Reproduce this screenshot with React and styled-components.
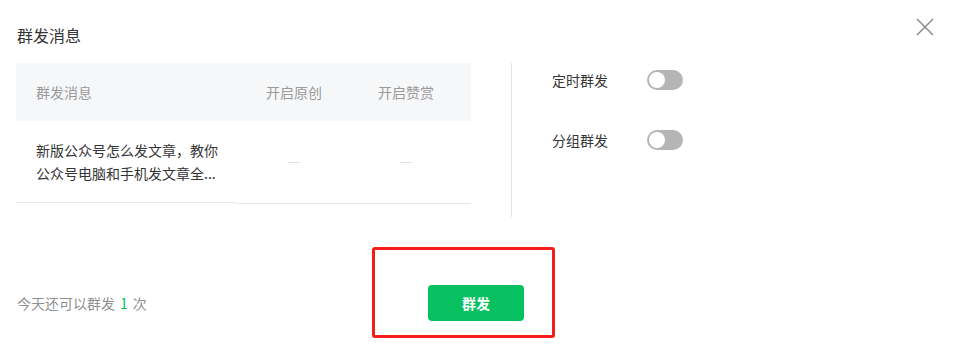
import React from "react";
import styled, { createGlobalStyle } from "styled-components";

const GlobalStyle = createGlobalStyle`
  html, body { margin: 0; padding: 0; background: #fff; }
  body { font-family: "Noto Sans CJK SC", "Noto Sans", "Liberation Sans", sans-serif; }
  * { box-sizing: border-box; }
`;

const Dialog = styled.div`
  width: 961px;
  height: 349px;
  background: #fff;
  display: flex;
  flex-direction: column;
`;

const Header = styled.div`
  display: flex;
  justify-content: space-between;
  align-items: flex-start;
  padding: 18px 27px 0 17px;
`;

const Title = styled.h3`
  margin: 9px 0 0;
  font-size: 16px;
  line-height: 16px;
  font-weight: 400;
  color: #353535;
`;

const CloseButton = styled.button`
  width: 18px;
  height: 18px;
  padding: 0;
  border: 0;
  background: none;
  cursor: pointer;
  display: block;
  svg { display: block; }
`;

const Body = styled.div`
  display: flex;
  margin-top: 20px;
  padding-left: 16px;
`;

const Table = styled.div`
  width: 455px;
  display: grid;
  grid-template-columns: 220px 116px 108px 1fr;
  align-self: flex-start;
`;

const HeadCell = styled.div`
  height: 58px;
  background: #f6f7f9;
  display: flex;
  align-items: center;
  justify-content: ${(p) => (p.$left ? "flex-start" : "center")};
  padding-left: ${(p) => (p.$left ? "20px" : "0")};
  font-size: 14px;
  color: #9a9a9a;
`;

const BodyCell = styled.div`
  height: ${(p) => (p.$left ? "82px" : "83px")};
  border-bottom: 1px solid #e6e6e6;
  display: flex;
  align-items: center;
  justify-content: ${(p) => (p.$left ? "flex-start" : "center")};
  padding: ${(p) => (p.$left ? "0 0 0 20px" : "0")};
  align-self: start;
`;

const ArticleTitle = styled.div`
  width: 184px;
  font-size: 14px;
  line-height: 23px;
  color: #353535;
`;

const Dash = styled.span`
  display: block;
  width: 12px;
  height: 1px;
  background: #e3e3e3;
  margin-top: 1px;
`;

const Divider = styled.div`
  width: 1px;
  height: 154px;
  background: #e5e5e5;
  margin-left: 40px;
`;

const Options = styled.div`
  display: flex;
  flex-direction: column;
  gap: 40px;
  padding: 7px 0 0 40px;
`;

const OptionRow = styled.label`
  display: flex;
  align-items: center;
  height: 20px;
`;

const OptionLabel = styled.span`
  width: 95px;
  font-size: 14px;
  color: #353535;
`;

const Toggle = styled.span`
  position: relative;
  width: 36px;
  height: 20px;
  border-radius: 10px;
  background: ${(p) => (p.$on ? "#07c160" : "#b5b5b5")};
  &::after {
    content: "";
    position: absolute;
    top: 2px;
    left: ${(p) => (p.$on ? "18px" : "2px")};
    width: 16px;
    height: 16px;
    border-radius: 50%;
    background: #fff;
  }
`;

const Footer = styled.div`
  display: grid;
  grid-template-columns: 411px 96px 1fr;
  align-items: center;
  margin-top: 68px;
  padding-left: 17px;
`;

const Quota = styled.div`
  font-size: 14px;
  color: #8f8f8f;
`;

const Count = styled.span`
  color: #07c160;
  margin: 0 5px;
`;

const ButtonWrap = styled.div`
  position: relative;
  width: 96px;
  height: 36px;
`;

const SendButton = styled.button`
  width: 96px;
  height: 36px;
  border: 0;
  border-radius: 4px;
  background: #07c160;
  color: #fff;
  font-family: inherit;
  font-size: 14px;
  font-weight: 700;
  cursor: pointer;
`;

const Highlight = styled.span`
  position: absolute;
  top: -38px;
  left: -56px;
  right: -31px;
  bottom: -17px;
  border: 3px solid #f51d1a;
  border-radius: 3px;
  pointer-events: none;
`;

export default function App() {
  const options = [
    { label: "定时群发", on: false },
    { label: "分组群发", on: false },
  ];
  return (
    <>
      <GlobalStyle />
      <Dialog>
        <Header>
          <Title>群发消息</Title>
          <CloseButton aria-label="关闭">
            <svg width="18" height="18" viewBox="0 0 18 18">
              <path d="M1 1 L17 17 M17 1 L1 17" stroke="#8a8a8a" strokeWidth="1.5" fill="none" />
            </svg>
          </CloseButton>
        </Header>
        <Body>
          <Table>
            <HeadCell $left>群发消息</HeadCell>
            <HeadCell>开启原创</HeadCell>
            <HeadCell>开启赞赏</HeadCell>
            <HeadCell />
            <BodyCell $left>
              <ArticleTitle>新版公众号怎么发文章，教你公众号电脑和手机发文章全...</ArticleTitle>
            </BodyCell>
            <BodyCell><Dash /></BodyCell>
            <BodyCell><Dash /></BodyCell>
            <BodyCell />
          </Table>
          <Divider />
          <Options>
            {options.map((o) => (
              <OptionRow key={o.label}>
                <OptionLabel>{o.label}</OptionLabel>
                <Toggle $on={o.on} />
              </OptionRow>
            ))}
          </Options>
        </Body>
        <Footer>
          <Quota>
            今天还可以群发<Count>1</Count>次
          </Quota>
          <ButtonWrap>
            <SendButton>群发</SendButton>
            <Highlight />
          </ButtonWrap>
        </Footer>
      </Dialog>
    </>
  );
}
